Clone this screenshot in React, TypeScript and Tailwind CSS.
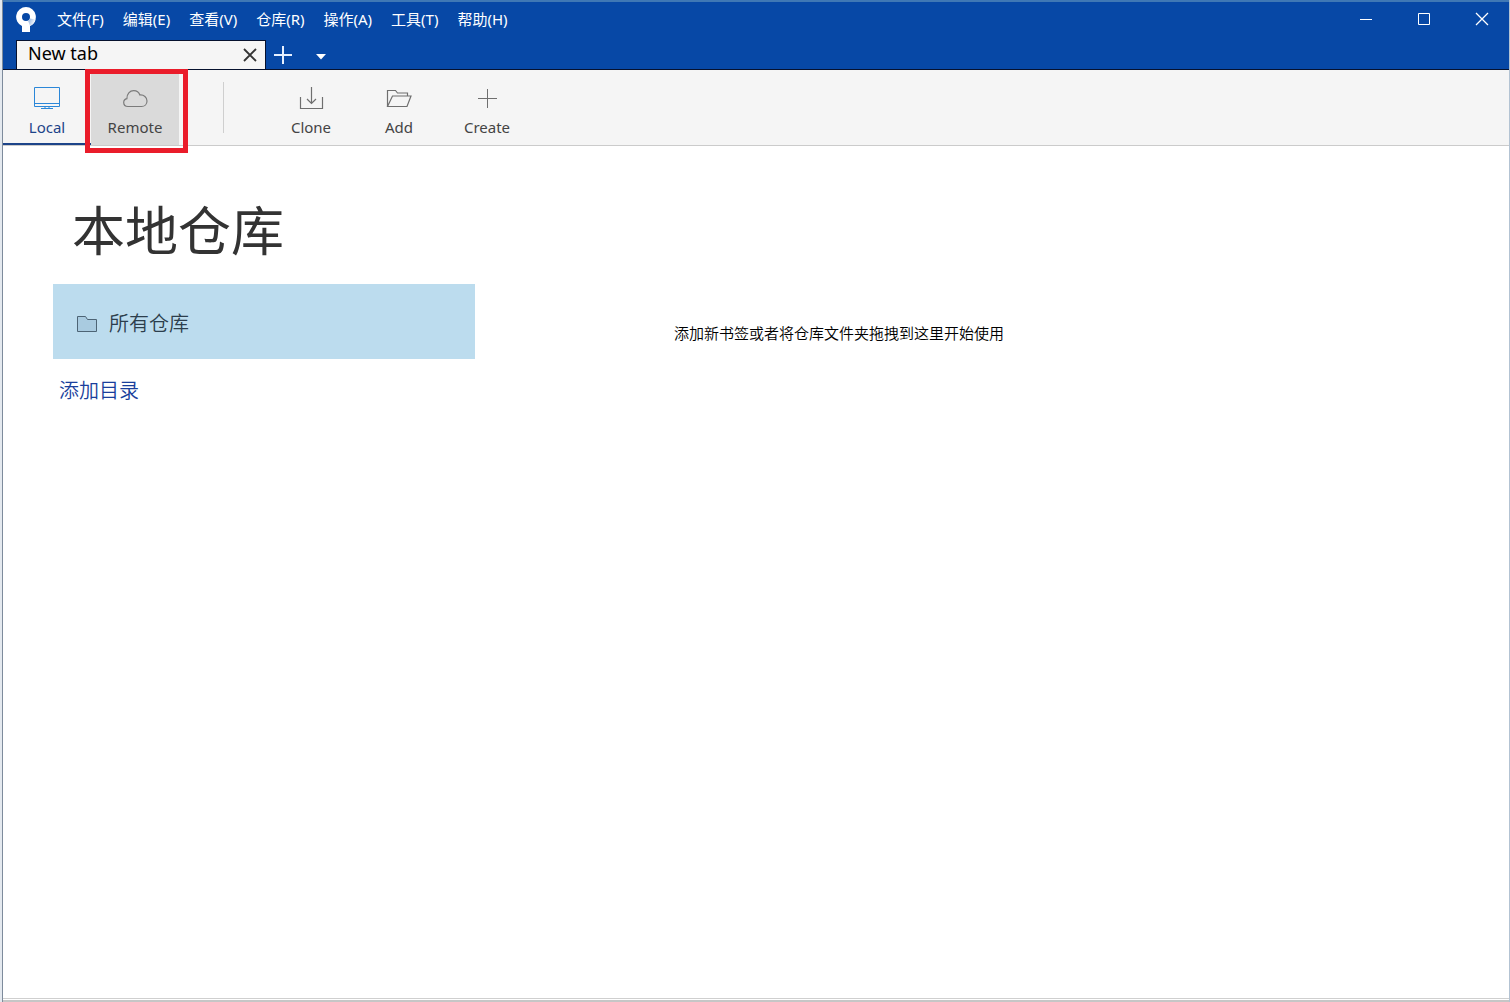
import { useState } from 'react'
import type { ReactNode } from 'react'

const menus = ['文件(F)', '编辑(E)', '查看(V)', '仓库(R)', '操作(A)', '工具(T)', '帮助(H)']

function Logo() {
  return (
    <svg width="20" height="26" viewBox="0 0 20 26" aria-hidden="true">
      <defs>
        <linearGradient id="logo-fold" x1="0" y1="0" x2="1" y2="0.4">
          <stop offset="0" stopColor="#8fb0dc" />
          <stop offset="1" stopColor="#fff" />
        </linearGradient>
      </defs>
      <path
        fillRule="evenodd"
        fill="#fff"
        d="M10 0a10 10 0 0 0-4 19.1V25h8v-5.900A10 10 0 0 0 10 0Zm0 6a4 4 0 1 1 0 8a4 4 0 0 1 0-8Z"
      />
      <path fill="url(#logo-fold)" d="M14 11.500 19.600 12.500A10 10 0 0 1 14 19.100l-2-5.600a4 4 0 0 0 2-2Z" />
    </svg>
  )
}

function MonitorIcon() {
  return (
    <svg width="26" height="24" viewBox="0 0 26 24" fill="none" stroke="#2b87d8" aria-hidden="true">
      <path d="M0.500 1.500h25v19h-25zM0.500 17.500h25M7 22.500h12M11 21v1M15 21v1" />
    </svg>
  )
}

function CloudIcon() {
  return (
    <svg width="26" height="24" viewBox="0 0 26 24" fill="none" stroke="#7b7b7b" strokeWidth="1.200" aria-hidden="true">
      <path d="M6 20.500c-2.800 0-4.300-1.700-4.300-3.900 0-2 1.400-3.500 3.200-3.900C4.800 8 7.800 4.700 11.700 4.700c3 0 5.300 1.700 6.200 4.300 3.900-.4 7.100 2.200 7.100 5.900 0 3.200-2.300 5.600-5.400 5.600Z" />
    </svg>
  )
}

function CloneIcon() {
  return (
    <svg width="26" height="24" viewBox="0 0 26 24" fill="none" stroke="#6f6f6f" strokeWidth="1.200" aria-hidden="true">
      <path d="M2.500 11v11.500h22V11M13.500 1v16M9 13l4.500 4.500L18 13" />
    </svg>
  )
}

function OpenFolderIcon() {
  return (
    <svg width="26" height="24" viewBox="0 0 26 24" fill="none" stroke="#6f6f6f" strokeWidth="1.200" aria-hidden="true">
      <path d="M1.500 20.500v-16h8l2 2.500h10v3M1.500 20.500l5-10.500h18.500l-4 10.500Z" />
    </svg>
  )
}

function PlusIcon() {
  return (
    <svg width="26" height="24" viewBox="0 0 26 24" fill="none" stroke="#6f6f6f" aria-hidden="true">
      <path d="M13.500 3v19M4 12.500h19" />
    </svg>
  )
}

function ToolButton({ label, icon, onClick, className = '' }: {
  label: string
  icon: ReactNode
  onClick?: () => void
  className?: string
}) {
  return (
    <button
      onClick={onClick}
      className={`flex w-22 shrink-0 flex-col items-center gap-[5px] pt-4 text-[15px] leading-6 ${className || 'text-[#444]'}`}
    >
      {icon}
      <span>{label}</span>
    </button>
  )
}

export default function App() {
  const [view, setView] = useState('local')

  return (
    <div className="flex min-h-screen flex-col bg-[#e4e9ef] pl-0.5 font-['Noto_Sans','Noto_Sans_CJK_SC',sans-serif]">
      <div className="flex flex-1 flex-col border-r border-l border-r-[#b3c3d3] border-l-[#7d8b9c] bg-white">
        <header className="border-t-2 border-b border-t-[#3f78b5] border-b-[#06112e] bg-[#0748a6] text-white">
          <div className="flex h-[38px] items-center pb-1">
            <div className="pt-0.5 pl-[13px]">
              <Logo />
            </div>
            <nav className="flex gap-[19px] pl-[21px] text-[15px] leading-5">
              {menus.map((menu) => (
                <button key={menu}>{menu}</button>
              ))}
            </nav>
            <div className="-mr-0.5 ml-auto flex">
              <button aria-label="Minimize" className="flex h-8 w-[58px] items-center justify-center">
                <svg width="14" height="14" viewBox="0 0 14 14" stroke="#fff" fill="none"><path d="M1 7.500h12" /></svg>
              </button>
              <button aria-label="Maximize" className="flex h-8 w-[58px] items-center justify-center">
                <svg width="14" height="14" viewBox="0 0 14 14" stroke="#fff" fill="none"><path d="M1.500 1.500h11v11h-11z" /></svg>
              </button>
              <button aria-label="Close" className="flex h-8 w-[58px] items-center justify-center">
                <svg width="14" height="14" viewBox="0 0 14 14" stroke="#fff" strokeWidth="1.300" fill="none"><path d="M1 1l12 12M13 1L1 13" /></svg>
              </button>
            </div>
          </div>

          {/* Tab strip */}
          <div className="flex h-[29px] pl-[13px]">
            <div className="flex w-[250px] items-center justify-between border-x border-t border-[#06112e] bg-[#f5f5f5] pr-2 pl-[11px] text-black">
              <span className="pb-1 text-[18px] leading-6">New tab</span>
              <button aria-label="Close tab">
                <svg width="14" height="14" viewBox="0 0 14 14" stroke="#333" strokeWidth="1.800" fill="none"><path d="M1 1l12 12M13 1L1 13" /></svg>
              </button>
            </div>
            <button aria-label="New tab" className="pl-2">
              <svg width="18" height="18" viewBox="0 0 18 18" stroke="#e6f0ff" strokeWidth="2" fill="none"><path d="M9 0v18M0 9h18" /></svg>
            </button>
            <button aria-label="Tab list" className="pt-1 pl-6">
              <svg width="10" height="6" viewBox="0 0 10 6" fill="#fff"><path d="M0 0h10L5 5.500z" /></svg>
            </button>
          </div>
        </header>

        {/* Toolbar */}
        <div className="flex h-[76px] border-b border-[#cbcbcb] bg-[#f5f5f5]">
          <ToolButton
            label="Local"
            icon={<MonitorIcon />}
            onClick={() => setView('local')}
            className={view === 'local' ? 'border-b-2 border-[#1d4489] text-[#1d4489]' : 'text-[#444]'}
          />
          <div className="relative flex bg-[#dadada]">
            <ToolButton label="Remote" icon={<CloudIcon />} onClick={() => setView('remote')} />
            <div className="pointer-events-none absolute -top-px -right-[9px] -bottom-2 -left-1.5 border-5 border-[#ea1c2a]" />
          </div>
          <div className="my-3 mr-[43px] ml-11 w-px bg-[#cfcfcf]" />
          <ToolButton label="Clone" icon={<CloneIcon />} />
          <ToolButton label="Add" icon={<OpenFolderIcon />} />
          <ToolButton label="Create" icon={<PlusIcon />} />
        </div>

        <main className="flex flex-1 pl-[50px]">
          <aside className="w-[422px] shrink-0 pt-12">
            <h1 className="pl-[19px] text-[53px] leading-[74px] text-[#333]">本地仓库</h1>
            <button className="mt-4 flex h-[75px] w-full items-center gap-3 bg-[#bcdcee] pt-1 pl-6 text-[20px] font-[350] text-[#2c3e4c]">
              <svg width="20" height="18" viewBox="0 0 20 18" fill="#a9cbe0" stroke="#4d6475" aria-hidden="true">
                <path d="M0.500 1.500h8l2 3h9v12h-19z" />
              </svg>
              所有仓库
            </button>
            <a href="#add" className="mt-4 inline-block pl-1.5 text-[20px] leading-8 font-[350] text-[#1a3f9c]">添加目录</a>
          </aside>
          <p className="pt-[175px] pl-[199px] text-[15px] leading-6 font-[350] text-black">添加新书签或者将仓库文件夹拖拽到这里开始使用</p>
        </main>
        <footer className="h-1 border-t border-b-2 border-t-[#cfcfcf] border-b-[#c6c6c6]" />
      </div>
    </div>
  )
}
